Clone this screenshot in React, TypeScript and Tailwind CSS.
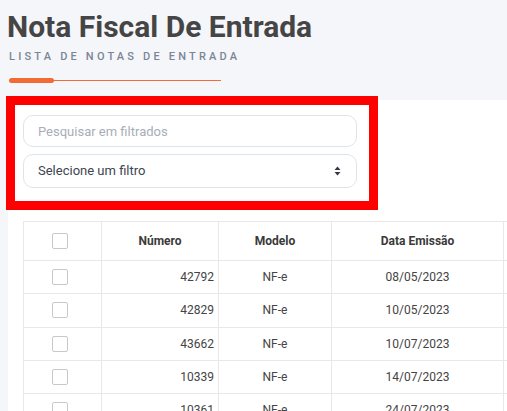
import { useState } from 'react';

const rows = [
  { numero: '42792', modelo: 'NF-e', data: '08/05/2023' },
  { numero: '42829', modelo: 'NF-e', data: '10/05/2023' },
  { numero: '43662', modelo: 'NF-e', data: '10/07/2023' },
  { numero: '10339', modelo: 'NF-e', data: '14/07/2023' },
  { numero: '10361', modelo: 'NF-e', data: '24/07/2023' },
];

function Checkbox() {
  return <div className="w-4 h-4 rounded-[2px] border border-[#c8c8c8] bg-white" />;
}

export default function App() {
  const [busca, setBusca] = useState('');

  return (
    <div className="w-[507px] h-[411px] overflow-hidden bg-[#f5f6fa] font-['Roboto','Liberation_Sans',sans-serif]">
      <div className="pt-[9px] pl-[7px]">
        <h1 className="text-[30px] leading-[36px] font-bold text-[#454545] whitespace-nowrap">
          Nota Fiscal De Entrada
        </h1>
        <p className="mt-[4px] pl-[2px] text-[11px] leading-[16px] font-medium tracking-[3.2px] text-[#7b8596] whitespace-nowrap">
          LISTA DE NOTAS DE ENTRADA
        </p>
        <div className="mt-[13px] ml-[2px] w-[212px] h-[5px] flex items-center">
          <div className="w-[45px] h-[5px] rounded-full bg-[#f26b35]" />
          <div className="flex-1 h-px bg-[#f26b35]" />
        </div>
      </div>

      <div className="relative mt-[17px] ml-[8px] bg-white pl-[15px] pt-[15px] h-[400px]">
        <div className="w-[334px] flex flex-col gap-[7px]">
          <input
            value={busca}
            onChange={(e) => setBusca(e.target.value)}
            placeholder="Pesquisar em filtrados"
            className="h-[32px] w-full rounded-[10px] border border-[#dfe4ea] px-[14px] text-[13px] text-[#3d4451] placeholder:text-[#a7aeb9] outline-none"
          />
          <div className="h-[34px] w-full rounded-[10px] border border-[#dfe4ea] px-[14px] flex items-center justify-between text-[13px] text-[#3d4451]">
            <span>Selecione um filtro</span>
            <svg width="7" height="10" viewBox="0 0 7 10" className="mr-[1px]">
              <path d="M3.5 0.5 L6.5 4 H0.5 Z" fill="#343a40" />
              <path d="M3.5 9.5 L6.5 6 H0.5 Z" fill="#343a40" />
            </svg>
          </div>
        </div>

        {/* marcação vermelha sobre a área de filtros */}
        <div className="absolute left-[-2px] top-[-4px] w-[372px] h-[114px] border-[9px] border-[#ff0000] pointer-events-none" />

        <div className="mt-[33px] w-[600px] text-[12px] text-[#444]">
          <div className="flex h-[40px] border-y border-[#e8e8e8] font-bold text-[#3a3a3a]">
            <div className="w-[78px] border-l border-[#e8e8e8] flex items-center pl-[28px]">
              <Checkbox />
            </div>
            <div className="w-[117px] border-l border-[#e8e8e8] flex items-center justify-center">Número</div>
            <div className="w-[113px] border-l border-[#e8e8e8] flex items-center justify-center">Modelo</div>
            <div className="w-[172px] border-l border-[#e8e8e8] flex items-center justify-center">Data Emissão</div>
            <div className="flex-1 border-l border-[#e8e8e8]" />
          </div>
          {rows.map((r) => (
            <div key={r.numero} className="flex h-[33.33px] border-b border-[#e8e8e8]">
              <div className="w-[78px] border-l border-[#e8e8e8] flex items-center pl-[28px]">
                <Checkbox />
              </div>
              <div className="w-[117px] border-l border-[#e8e8e8] flex items-center justify-end pr-[4px]">{r.numero}</div>
              <div className="w-[113px] border-l border-[#e8e8e8] flex items-center justify-center">{r.modelo}</div>
              <div className="w-[172px] border-l border-[#e8e8e8] flex items-center justify-center">{r.data}</div>
              <div className="flex-1 border-l border-[#e8e8e8]" />
            </div>
          ))}
        </div>
      </div>
    </div>
  );
}
